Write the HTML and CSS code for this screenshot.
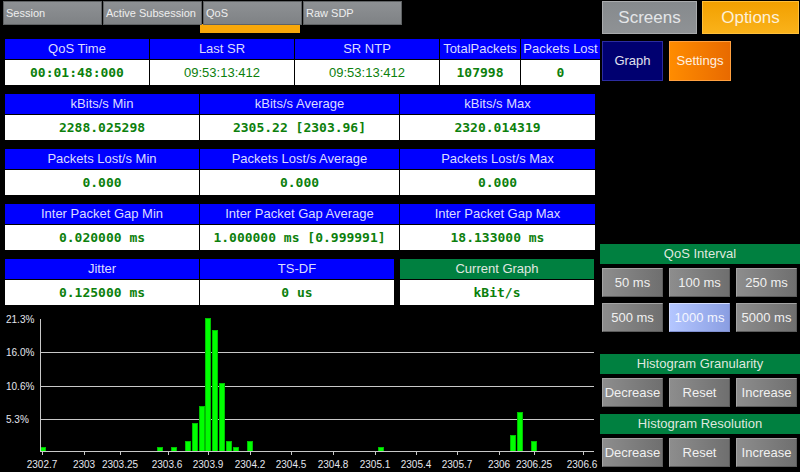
FILE: index.html
```html
<!DOCTYPE html>
<html>
<head>
<meta charset="utf-8">
<link rel="stylesheet" href="styles.css">
</head>
<body>
<div class="app">
  <div class="main">
    <div class="tabs">
      <div class="tab">Session</div>
      <div class="tab">Active Subsession</div>
      <div class="tab">QoS</div>
      <div class="tab">Raw SDP</div>
    </div>
    <div class="indicator-row"><div class="indicator"></div></div>

    <div class="tables">
      <div class="tbl cols5">
        <div class="h">QoS Time</div>
        <div class="h">Last SR</div>
        <div class="h">SR NTP</div>
        <div class="h">TotalPackets</div>
        <div class="h">Packets Lost</div>
        <div class="d mono">00:01:48:000</div>
        <div class="d sans">09:53:13:412</div>
        <div class="d sans">09:53:13:412</div>
        <div class="d mono">107998</div>
        <div class="d mono">0</div>
      </div>

      <div class="tbl cols3">
        <div class="h">kBits/s Min</div>
        <div class="h">kBits/s Average</div>
        <div class="h">kBits/s Max</div>
        <div class="d mono">2288.025298</div>
        <div class="d mono">2305.22 [2303.96]</div>
        <div class="d mono">2320.014319</div>
      </div>

      <div class="tbl cols3">
        <div class="h">Packets Lost/s Min</div>
        <div class="h">Packets Lost/s Average</div>
        <div class="h">Packets Lost/s Max</div>
        <div class="d mono">0.000</div>
        <div class="d mono">0.000</div>
        <div class="d mono">0.000</div>
      </div>

      <div class="tbl cols3">
        <div class="h">Inter Packet Gap Min</div>
        <div class="h">Inter Packet Gap Average</div>
        <div class="h">Inter Packet Gap Max</div>
        <div class="d mono">0.020000 ms</div>
        <div class="d mono">1.000000 ms [0.999991]</div>
        <div class="d mono">18.133000 ms</div>
      </div>

      <div class="row5">
        <div class="tbl cols2">
          <div class="h">Jitter</div>
          <div class="h">TS-DF</div>
          <div class="d mono">0.125000 ms</div>
          <div class="d mono">0 us</div>
        </div>
        <div class="tbl cols1">
          <div class="h green">Current Graph</div>
          <div class="d mono">kBit/s</div>
        </div>
      </div>
    </div>

    <svg class="chart" width="600" height="167" viewBox="0 0 600 167">
      <g class="grid-lines">
        <line x1="40" y1="47.5" x2="594" y2="47.5"/>
        <line x1="40" y1="81.5" x2="594" y2="81.5"/>
        <line x1="40" y1="114.5" x2="594" y2="114.5"/>
      </g>
      <g class="bars">
        <rect x="40.5" y="142.5" width="5" height="4"/>
        <rect x="157.5" y="142.5" width="5" height="4"/>
        <rect x="171.5" y="142.5" width="5" height="4"/>
        <rect x="185.5" y="136.5" width="5" height="10"/>
        <rect x="192.5" y="118.5" width="5" height="28"/>
        <rect x="199.5" y="101.5" width="5" height="45"/>
        <rect x="205.5" y="13.5" width="5" height="133"/>
        <rect x="212.5" y="25.5" width="5" height="121"/>
        <rect x="219.5" y="78.5" width="5" height="68"/>
        <rect x="226.5" y="136.5" width="5" height="10"/>
        <rect x="233.5" y="142.5" width="5" height="4"/>
        <rect x="247.5" y="136.5" width="5" height="10"/>
        <rect x="378.5" y="142.5" width="5" height="4"/>
        <rect x="510.5" y="130.5" width="5" height="16"/>
        <rect x="517.5" y="107.5" width="5" height="39"/>
        <rect x="531.5" y="136.5" width="5" height="10"/>
      </g>
      <g class="axis">
        <line x1="40.5" y1="14" x2="40.5" y2="147"/>
        <line x1="40" y1="146.5" x2="594" y2="146.5"/>
        <line x1="42.5" y1="147" x2="42.5" y2="150"/>
        <line x1="84.5" y1="147" x2="84.5" y2="150"/>
        <line x1="120.5" y1="147" x2="120.5" y2="150"/>
        <line x1="168.5" y1="147" x2="168.5" y2="150"/>
        <line x1="208.5" y1="147" x2="208.5" y2="150"/>
        <line x1="250.5" y1="147" x2="250.5" y2="150"/>
        <line x1="291.5" y1="147" x2="291.5" y2="150"/>
        <line x1="333.5" y1="147" x2="333.5" y2="150"/>
        <line x1="375.5" y1="147" x2="375.5" y2="150"/>
        <line x1="416.5" y1="147" x2="416.5" y2="150"/>
        <line x1="457.5" y1="147" x2="457.5" y2="150"/>
        <line x1="499.5" y1="147" x2="499.5" y2="150"/>
        <line x1="534.5" y1="147" x2="534.5" y2="150"/>
        <line x1="583.5" y1="147" x2="583.5" y2="150"/>
      </g>
      <g class="ylabels">
        <text x="6" y="17.5">21.3%</text>
        <text x="6" y="50.5">16.0%</text>
        <text x="6" y="84.5">10.6%</text>
        <text x="6" y="117.5">5.3%</text>
      </g>
      <g class="xlabels">
        <text x="42" y="163">2302.7</text>
        <text x="84" y="163">2303</text>
        <text x="120" y="163">2303.25</text>
        <text x="167" y="163">2303.6</text>
        <text x="208" y="163">2303.9</text>
        <text x="250" y="163">2304.2</text>
        <text x="291" y="163">2304.5</text>
        <text x="333" y="163">2304.8</text>
        <text x="375" y="163">2305.1</text>
        <text x="416" y="163">2305.4</text>
        <text x="457" y="163">2305.7</text>
        <text x="499" y="163">2306</text>
        <text x="534" y="163">2306.25</text>
        <text x="582" y="163">2306.6</text>
      </g>
    </svg>
  </div>

  <div class="side">
    <div class="top-row">
      <div class="btn-screens">Screens</div>
      <div class="btn-options">Options</div>
    </div>
    <div class="mode-row">
      <div class="btn-graph">Graph</div>
      <div class="btn-settings">Settings</div>
    </div>

    <div class="section first">
      <div class="sec-head">QoS Interval</div>
      <div class="btn-grid">
        <div class="btn">50 ms</div>
        <div class="btn">100 ms</div>
        <div class="btn">250 ms</div>
        <div class="btn">500 ms</div>
        <div class="btn selected">1000 ms</div>
        <div class="btn">5000 ms</div>
      </div>
    </div>

    <div class="section second">
      <div class="sec-head">Histogram Granularity</div>
      <div class="btn-grid">
        <div class="btn">Decrease</div>
        <div class="btn">Reset</div>
        <div class="btn">Increase</div>
      </div>
    </div>

    <div class="section third">
      <div class="sec-head">Histogram Resolution</div>
      <div class="btn-grid">
        <div class="btn">Decrease</div>
        <div class="btn">Reset</div>
        <div class="btn">Increase</div>
      </div>
    </div>
  </div>
</div>
</body>
</html>
```

FILE: styles.css
```css
* { box-sizing: border-box; }

html, body {
  margin: 0;
  padding: 0;
  background: #000;
}

body {
  font-family: "Liberation Sans", Arial, sans-serif;
  font-size: 13px;
  color: #e8e8e8;
}

.app {
  display: flex;
  width: 800px;
  height: 472px;
  overflow: hidden;
  background: #000;
}

.main {
  width: 600px;
  flex: none;
}

.side {
  width: 200px;
  flex: none;
}

/* Tabs */
.tabs {
  display: flex;
  gap: 1px;
  padding-left: 3px;
  padding-top: 1px;
}

.tab {
  width: 99px;
  height: 24px;
  line-height: 23px;
  padding-left: 2px;
  font-size: 11px;
  color: #eeeeee;
  background: linear-gradient(#8e9194, #7f8285);
  border: 1px solid #5f6264;
  white-space: nowrap;
  overflow: hidden;
}

.indicator-row {
  margin-top: -1px;
  padding-left: 200px;
}

.indicator {
  width: 100px;
  height: 9px;
  background: #f9a80a;
}

/* Tables */
.tables {
  display: flex;
  flex-direction: column;
  gap: 9px;
  margin-top: 6px;
  padding-left: 5px;
}

.tbl {
  display: grid;
  gap: 1px;
  background: #000;
  grid-template-rows: 20px 25px;
}

.cols5 { grid-template-columns: 144px 144px 144px 80px 79px; }
.cols3 { grid-template-columns: 194px 199px 195px; }
.cols2 { grid-template-columns: 194px 194px; }
.cols1 { grid-template-columns: 194px; }

.row5 {
  display: flex;
  gap: 6px;
}

.h {
  background: #0000ff;
  color: #dcdcff;
  font-size: 13px;
  line-height: 20px;
  text-align: center;
  white-space: nowrap;
  overflow: hidden;
}

.h.green {
  background: #008040;
  color: #e0e8e0;
}

.d {
  background: #ffffff;
  color: #0c800c;
  line-height: 25px;
  text-align: center;
  white-space: nowrap;
  overflow: hidden;
}

.mono {
  font-family: "DejaVu Sans Mono", "Liberation Mono", monospace;
  font-weight: bold;
  font-size: 13px;
}

.sans {
  font-family: "Liberation Sans", Arial, sans-serif;
  font-size: 13px;
}

/* Chart */
.chart {
  display: block;
}

.grid-lines line,
.axis line {
  stroke: #c8c8c8;
  stroke-width: 1;
}

.bars rect {
  fill: #00ff00;
  stroke: #00c000;
  stroke-width: 1;
}

.ylabels text,
.xlabels text {
  font-family: "Liberation Sans", Arial, sans-serif;
  font-size: 10px;
  fill: #e4e6ee;
}

.xlabels text {
  text-anchor: middle;
}

/* Side panel */
.top-row {
  display: flex;
  gap: 5px;
  padding-left: 2px;
  margin-top: 1px;
}

.btn-screens,
.btn-options {
  height: 33px;
  font-size: 17px;
  line-height: 31px;
  text-align: center;
}

.btn-screens {
  width: 95px;
  background: linear-gradient(#868a8d, #8f9295);
  border: 1px solid #a9abad;
  color: #e4e6e8;
}

.btn-options {
  width: 97px;
  background: linear-gradient(#f2a000, #fab21a);
  border: 1px solid #ffbf3a;
  color: #fdf0d8;
}

.mode-row {
  display: flex;
  gap: 6px;
  padding-left: 2px;
  margin-top: 7px;
}

.btn-graph,
.btn-settings {
  height: 40px;
  line-height: 38px;
  text-align: center;
  font-size: 13px;
}

.btn-graph {
  width: 61px;
  background: #000070;
  border: 1px solid #2c2ca0;
  color: #e0e0ee;
}

.btn-settings {
  width: 62px;
  background: linear-gradient(to right, #ff8c00, #e86a00);
  border: 1px solid #ffa040;
  color: #fff0e0;
}

.section.first { margin-top: 163px; }
.section.second { margin-top: 22px; }
.section.third { margin-top: 7px; }

.sec-head {
  height: 20px;
  line-height: 20px;
  background: #008040;
  color: #dfe8df;
  text-align: center;
  font-size: 13px;
}

.btn-grid {
  display: grid;
  grid-template-columns: 61px 61px 61px;
  grid-auto-rows: 29px;
  column-gap: 6px;
  row-gap: 6px;
  padding-left: 2px;
  margin-top: 4px;
}

.btn {
  background: linear-gradient(to right, #8d8d8d, #6f6f6f);
  border: 1px solid;
  border-color: #a4a4a4 #5c5c5c #5c5c5c #a4a4a4;
  color: #f0f0f0;
  text-align: center;
  line-height: 27px;
  font-size: 13px;
  white-space: nowrap;
  overflow: hidden;
}

.btn.selected {
  background: linear-gradient(to right, #b4c6ff, #8a9ee2);
  border-color: #d4ddff #8090d0 #8090d0 #d4ddff;
  color: #f4f6ff;
}
```
